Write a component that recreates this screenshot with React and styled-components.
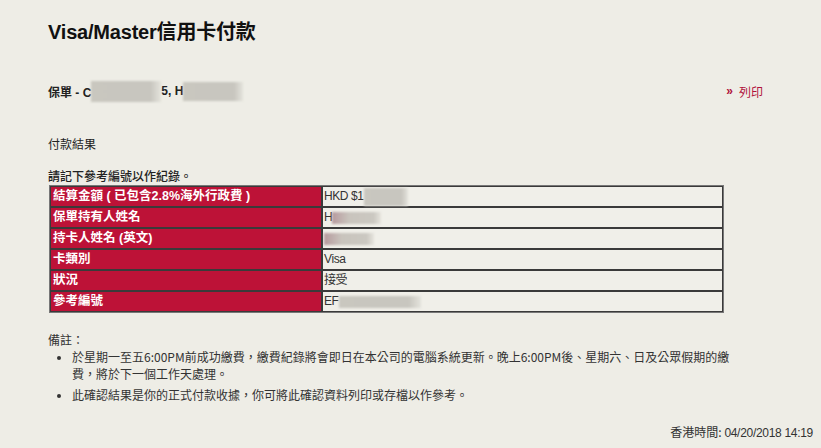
import React from "react";
import styled, { createGlobalStyle } from "styled-components";

const Global = createGlobalStyle`
  html, body { margin: 0; padding: 0; background: #eeede6; }
  body { font-family: "Liberation Sans", "Noto Sans CJK TC", Arial, sans-serif; color: #222; }
`;

const Page = styled.div`
  width: 821px;
  height: 448px;
  box-sizing: border-box;
  padding: 19px 8px 0 48px;
  display: flex;
  flex-direction: column;
  position: relative;
`;

const Title = styled.h1`
  margin: 0;
  font-size: 20px;
  line-height: 26px;
  font-weight: bold;
  color: #111;
  letter-spacing: -0.2px;
`;

const PolicyRow = styled.div`
  margin-top: 35px;
  display: flex;
  justify-content: space-between;
  align-items: center;
  padding-right: 50px;
  height: 22px;
`;

const Policy = styled.div`
  font-size: 12px;
  font-weight: bold;
  color: #222;
  display: flex;
  align-items: center;
`;

const Blur = styled.span`
  display: inline-block;
  width: ${(p) => p.w}px;
  height: ${(p) => p.h || 20}px;
  background: ${(p) => p.tint ? "linear-gradient(90deg, #b79a9e 0%, #c9c4bd 35%, #cbc8c1 85%, #e6e4dd 100%)" : "linear-gradient(90deg, #c9c7bf 0%, #c8c6bf 85%, #e4e3dc 100%)"};
  filter: blur(1px);
  vertical-align: middle;
`;

const PrintLink = styled.a`
  font-size: 12px;
  color: #b0103a;
  text-decoration: none;
  display: flex;
  align-items: center;
  gap: 6px;
  font-family: "Noto Sans CJK TC", sans-serif;
`;

const Chev = styled.span`
  font-weight: bold;
  font-size: 12px;
  font-family: "Liberation Sans", sans-serif;
`;

const Section = styled.div`
  margin-top: 34px;
  font-size: 12px;
  line-height: 16px;
  color: #222;
  font-family: "Noto Sans CJK TC", sans-serif;
`;

const Instruction = styled.div`
  margin-top: 16px;
  font-size: 12px;
  line-height: 16px;
  color: #222;
  font-weight: 500;
  font-family: "Noto Sans CJK TC", sans-serif;
`;

const Table = styled.table`
  width: 675px;
  margin-top: 1px;
  margin-left: 1px;
  border-collapse: separate;
  border-spacing: 0;
  border: 1px solid #777;
`;

const LabelCell = styled.td`
  width: 266px;
  background: #bd1237;
  color: #fff;
  font-weight: bold;
  font-size: 12.5px;
  line-height: 19px;
  padding: 0 2px;
  border: 1px solid #3a3a3a;
  font-family: "Liberation Sans", "Noto Sans CJK TC", sans-serif;
  white-space: nowrap;
`;

const ValueCell = styled.td`
  background: #f0efe9;
  color: #333;
  font-size: 12px;
  line-height: 19px;
  padding: 0 1px;
  border: 1px solid #3a3a3a;
  font-family: "Liberation Sans", "Noto Sans CJK TC", sans-serif;
  letter-spacing: -0.4px;
  white-space: nowrap;
`;

const Notes = styled.div`
  margin-top: 18px;
  font-size: 12px;
  line-height: 17px;
  color: #333;
  font-family: "Noto Sans CJK TC", sans-serif;
`;

const List = styled.ul`
  margin: 0;
  padding-left: 24px;
  width: 680px;
  li { margin-bottom: 4px; }
  li::marker { font-size: 10px; }
`;

const Footer = styled.div`
  position: absolute;
  right: 8px;
  bottom: 8px;
  font-size: 12px;
  color: #333;
  font-family: "Noto Sans CJK TC", sans-serif;
  span { font-family: "Liberation Sans", sans-serif; letter-spacing: -0.3px; }
`;

const rows = [
  ["結算金額 ( 已包含2.8%海外行政費 )", <>HKD $1<Blur w={44} h={18} /></>],
  ["保單持有人姓名", <>H<Blur w={49} h={12} tint /></>],
  ["持卡人姓名 (英文)", <><Blur w={50} h={12} tint /></>],
  ["卡類別", "Visa"],
  ["狀況", "接受"],
  ["參考編號", <>EF<Blur w={82} h={12} /></>],
];

export default function App() {
  return (
    <>
      <Global />
      <Page>
        <Title>Visa/Master信用卡付款</Title>
        <PolicyRow>
          <Policy>
            保單 - C<Blur w={70} h={21} />5, H<Blur w={60} h={19} />
          </Policy>
          <PrintLink href="#">
            <Chev>»</Chev>列印
          </PrintLink>
        </PolicyRow>
        <Section>付款結果</Section>
        <Instruction>請記下參考編號以作紀錄。</Instruction>
        <Table>
          <tbody>
            {rows.map(([l, v], i) => (
              <tr key={i}>
                <LabelCell>{l}</LabelCell>
                <ValueCell>{v}</ValueCell>
              </tr>
            ))}
          </tbody>
        </Table>
        <Notes>
          備註：
          <List>
            <li>於星期一至五6:00PM前成功繳費，繳費紀錄將會即日在本公司的電腦系統更新。晚上6:00PM後、星期六、日及公眾假期的繳費，將於下一個工作天處理。</li>
            <li>此確認結果是你的正式付款收據，你可將此確認資料列印或存檔以作參考。</li>
          </List>
        </Notes>
        <Footer>香港時間: <span>04/20/2018 14:19</span></Footer>
      </Page>
    </>
  );
}
